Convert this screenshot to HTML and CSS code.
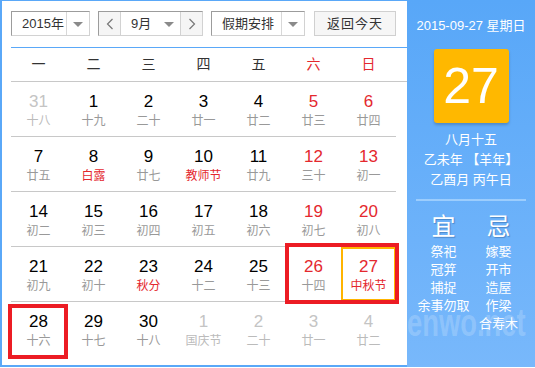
FILE: index.html
```html
<!DOCTYPE html>
<html lang="zh-CN">

<head>
    <meta charset="UTF-8" />
    <meta name="viewport" content="width=device-width, initial-scale=1.0" />
    <title>万年历</title>
    <link rel="stylesheet" href="styles.css">
</head>

<body>

    <div class="calendar">
        <div class="main">
            <div class="toolbar">
                <div class="select year">
                    <span class="select-text">2015年</span>
                    <span class="select-arrow"></span>
                </div>

                <div class="month-group">
                    <div class="nav prev">
                        <svg width="8" height="12" viewBox="0 0 8 12"><polyline points="6.5,1 1.5,6 6.5,11" /></svg>
                    </div>
                    <div class="month">
                        <span class="select-text">9月</span>
                        <span class="month-arrow"></span>
                    </div>
                    <div class="nav next">
                        <svg width="8" height="12" viewBox="0 0 8 12"><polyline points="1.5,1 6.5,6 1.5,11" /></svg>
                    </div>
                </div>

                <div class="select holiday">
                    <span class="select-text">假期安排</span>
                    <span class="select-arrow"></span>
                </div>

                <div class="today-btn">返回今天</div>
            </div>

            <div class="weekdays">
                <div>一</div>
                <div>二</div>
                <div>三</div>
                <div>四</div>
                <div>五</div>
                <div class="weekend">六</div>
                <div class="weekend">日</div>
            </div>

            <div class="days">
                <!-- week 1 -->
                <div class="day other"><span class="num">31</span><span class="lunar">十八</span></div>
                <div class="day"><span class="num">1</span><span class="lunar">十九</span></div>
                <div class="day"><span class="num">2</span><span class="lunar">二十</span></div>
                <div class="day"><span class="num">3</span><span class="lunar">廿一</span></div>
                <div class="day"><span class="num">4</span><span class="lunar">廿二</span></div>
                <div class="day weekend"><span class="num">5</span><span class="lunar">廿三</span></div>
                <div class="day weekend"><span class="num">6</span><span class="lunar">廿四</span></div>

                <!-- week 2 -->
                <div class="day"><span class="num">7</span><span class="lunar">廿五</span></div>
                <div class="day"><span class="num">8</span><span class="lunar festival">白露</span></div>
                <div class="day"><span class="num">9</span><span class="lunar">廿七</span></div>
                <div class="day"><span class="num">10</span><span class="lunar festival">教师节</span></div>
                <div class="day"><span class="num">11</span><span class="lunar">廿九</span></div>
                <div class="day weekend"><span class="num">12</span><span class="lunar">三十</span></div>
                <div class="day weekend"><span class="num">13</span><span class="lunar">初一</span></div>

                <!-- week 3 -->
                <div class="day"><span class="num">14</span><span class="lunar">初二</span></div>
                <div class="day"><span class="num">15</span><span class="lunar">初三</span></div>
                <div class="day"><span class="num">16</span><span class="lunar">初四</span></div>
                <div class="day"><span class="num">17</span><span class="lunar">初五</span></div>
                <div class="day"><span class="num">18</span><span class="lunar">初六</span></div>
                <div class="day weekend"><span class="num">19</span><span class="lunar">初七</span></div>
                <div class="day weekend"><span class="num">20</span><span class="lunar">初八</span></div>

                <!-- week 4 -->
                <div class="day"><span class="num">21</span><span class="lunar">初九</span></div>
                <div class="day"><span class="num">22</span><span class="lunar">初十</span></div>
                <div class="day"><span class="num">23</span><span class="lunar festival">秋分</span></div>
                <div class="day"><span class="num">24</span><span class="lunar">十二</span></div>
                <div class="day"><span class="num">25</span><span class="lunar">十三</span></div>
                <div class="day weekend"><span class="num">26</span><span class="lunar">十四</span></div>
                <div class="day weekend today"><span class="num">27</span><span class="lunar festival">中秋节</span></div>

                <!-- week 5 -->
                <div class="day"><span class="num">28</span><span class="lunar">十六</span></div>
                <div class="day"><span class="num">29</span><span class="lunar">十七</span></div>
                <div class="day"><span class="num">30</span><span class="lunar">十八</span></div>
                <div class="day other"><span class="num">1</span><span class="lunar">国庆节</span></div>
                <div class="day other"><span class="num">2</span><span class="lunar">二十</span></div>
                <div class="day other"><span class="num">3</span><span class="lunar">廿一</span></div>
                <div class="day other"><span class="num">4</span><span class="lunar">廿二</span></div>
            </div>

            <!-- red marks drawn over the grid -->
            <div class="mark mark-weekend"></div>
            <div class="mark mark-monday"></div>
        </div>

        <div class="side">
            <div class="side-date">2015-09-27 星期日</div>
            <div class="big-day">27</div>
            <div class="side-lunar">
                <div>八月十五</div>
                <div>乙未年 【羊年】</div>
                <div>乙酉月 丙午日</div>
            </div>
            <div class="side-line"></div>
            <div class="almanac">
                <div class="almanac-col">
                    <div class="almanac-title">宜</div>
                    <div>祭祀</div>
                    <div>冠笄</div>
                    <div>捕捉</div>
                    <div>余事勿取</div>
                </div>
                <div class="almanac-col">
                    <div class="almanac-title">忌</div>
                    <div>嫁娶</div>
                    <div>开市</div>
                    <div>造屋</div>
                    <div>作梁</div>
                    <div>合寿木</div>
                </div>
            </div>
            <div class="watermark">enwo.net</div>
        </div>
    </div>

</body>

</html>
```

FILE: styles.css
```css
* {
    box-sizing: border-box;
}

body {
    margin: 0;
    background: #fff;
    font-family: "Liberation Sans", "Noto Sans CJK SC", sans-serif;
}

.calendar {
    display: flex;
    width: 535px;
    height: 367px;
    border-top: 1px solid #5aa8f8;
    border-left: 2px solid #5aa8f8;
    border-bottom: 2px solid #5aa8f8;
}

/* left part */

.main {
    position: relative;
    width: 405px;
    padding: 10px 0 0 9px;
    background: #fff;
}

.toolbar {
    display: flex;
    height: 25px;
    font-size: 13px;
    color: #333;
}

.select,
.month-group {
    display: flex;
    height: 25px;
    border: 1px solid;
    border-color: #9c9c9c #d2d2d2 #d2d2d2 #9c9c9c;
    background: #fff;
}

.year {
    width: 79px;
}

.holiday {
    width: 94px;
    margin-left: 8px;
}

.select-text {
    flex: 1;
    padding-left: 10px;
    line-height: 23px;
}

.select-arrow {
    width: 23px;
    border-left: 1px solid #d8d8d8;
    position: relative;
}

.select-arrow::after,
.month-arrow::after {
    content: "";
    position: absolute;
    left: 50%;
    top: 10px;
    margin-left: -5px;
    border-left: 5px solid transparent;
    border-right: 5px solid transparent;
    border-top: 5px solid #8a8a8a;
}

.month-group {
    width: 105px;
    margin-left: 8px;
}

.nav {
    width: 22px;
    display: flex;
    align-items: center;
    justify-content: center;
    background: #f5f5f5;
}

.nav svg polyline {
    fill: none;
    stroke: #777;
    stroke-width: 1.2;
}

.prev {
    border-right: 1px solid #d2d2d2;
}

.next {
    border-left: 1px solid #d2d2d2;
}

.month {
    display: flex;
    width: 59px;
}

.month-arrow {
    width: 22px;
    position: relative;
}

.today-btn {
    width: 82px;
    margin-left: 9px;
    border: 1px solid #d0d0d0;
    background: #f6f6f6;
    text-align: center;
    line-height: 23px;
    letter-spacing: 1px;
}

.weekdays {
    display: grid;
    grid-template-columns: repeat(7, 55px);
    margin-top: 11px;
    height: 35px;
    border-top: 1px solid #5aa8f8;
    border-bottom: 1px solid #c8c8c8;
    font-size: 14px;
    color: #333;
    text-align: center;
    line-height: 32px;
}

.weekdays .weekend {
    color: #e4282e;
}

.days {
    display: grid;
    grid-template-columns: repeat(7, 55px);
    width: 385px;
}

.day {
    height: 55px;
    padding-top: 10px;
    border-bottom: 1px solid #c8c8c8;
    text-align: center;
}

.day:nth-last-child(-n+7) {
    border-bottom: none;
}

.num {
    display: block;
    font-size: 17px;
    line-height: 20px;
    color: #000;
}

.lunar {
    display: block;
    font-size: 12px;
    line-height: 18px;
    color: #999;
}

.weekend .num,
.lunar.festival {
    color: #e4282e;
}

.other .num {
    color: #c4c4c4;
}

.other .lunar {
    color: #bbb;
}

.today {
    box-shadow: inset 0 0 0 2px #ffb400;
}

.mark {
    position: absolute;
    border: 4px solid #ec1c24;
}

.mark-weekend {
    left: 283px;
    top: 242px;
    width: 114px;
    height: 61px;
}

.mark-monday {
    left: 6px;
    top: 303px;
    width: 60px;
    height: 55px;
}

/* right part */

.side {
    position: relative;
    overflow: hidden;
    width: 128px;
    margin-top: -1px;
    margin-bottom: -2px;
    background: linear-gradient(#58a7f8, #78b8fb);
    color: #fff;
    text-align: center;
    font-size: 13px;
}

.side-date {
    margin-top: 17px;
    line-height: 18px;
}

.big-day {
    width: 75px;
    height: 74px;
    margin: 14px auto 0;
    border-radius: 3px;
    background: #ffb800;
    box-shadow: 0 2px 3px rgba(0, 0, 0, 0.2);
    font-size: 50px;
    line-height: 74px;
}

.side-lunar {
    margin-top: 7px;
    line-height: 20px;
}

.side-line {
    width: 110px;
    height: 2px;
    margin: 9px auto 0;
    background: #9ccdfd;
}

.almanac {
    display: flex;
    justify-content: center;
    margin-top: 12px;
    line-height: 18px;
}

.almanac-col {
    width: 55px;
    white-space: nowrap;
}

.almanac-title {
    font-size: 24px;
    line-height: 28px;
    margin-bottom: 2px;
    text-shadow: 1px 1px 1px rgba(0, 40, 90, 0.3);
}

.watermark {
    position: absolute;
    left: 0;
    top: 302px;
    font-size: 38px;
    font-weight: bold;
    color: rgba(255, 255, 255, 0.2);
    transform: scaleX(0.72);
    transform-origin: left;
    white-space: nowrap;
}
```
